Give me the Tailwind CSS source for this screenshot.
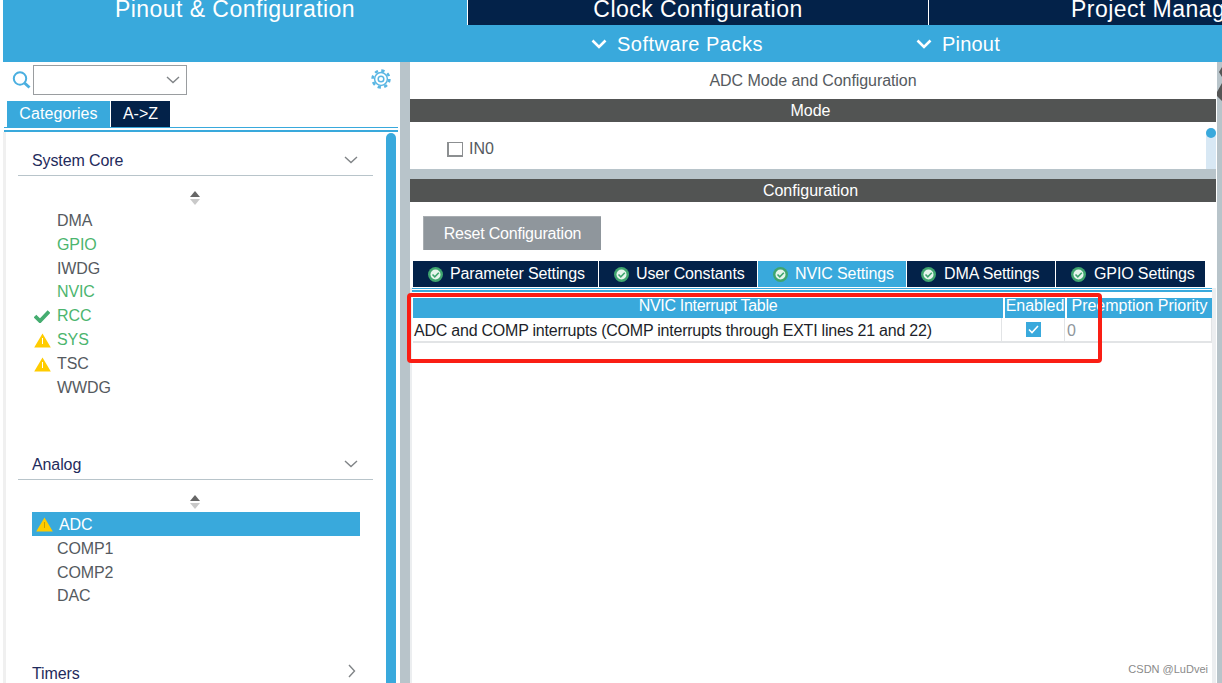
<!DOCTYPE html>
<html lang="en">
<head>
    <meta charset="UTF-8">
    <title>ADC Mode and Configuration</title>
    <script src="https://cdn.jsdelivr.net/npm/@tailwindcss/browser@4"></script>
</head>
<body class="bg-white overflow-hidden font-['Liberation_Sans',Arial,sans-serif]">
<div class="relative w-[1222px] h-[683px] overflow-hidden pl-[3px] flex flex-col">

    <!-- top nav -->
    <header class="bg-[#39a9dc] h-[62px] shrink-0 text-white">
        <div class="flex h-[25px] overflow-hidden text-[23px] leading-[18px] tracking-[0.45px]">
            <div class="w-[464px] shrink-0 text-center">Pinout &amp; Configuration</div>
            <div class="w-[461px] shrink-0 bg-[#032249] border-l border-white text-center">Clock Configuration</div>
            <div class="flex-1 bg-[#032249] border-l border-white pl-[142px] whitespace-nowrap">Project Manager</div>
        </div>
        <div class="flex h-[37px] items-center text-[20px] tracking-[0.5px]">
            <div class="w-[761px] shrink-0 flex justify-end items-center gap-[10px]">
                <svg class="w-[16px] h-[12px]" viewBox="0 0 16 12" fill="none" stroke="white" stroke-width="2.6"><path d="M1.5 2.5 8 9l6.5-6.5"/></svg>
                <span class="w-[147px] whitespace-nowrap">Software Packs</span>
            </div>
            <div class="ml-[152px] flex items-center gap-[10px]">
                <svg class="w-[16px] h-[12px]" viewBox="0 0 16 12" fill="none" stroke="white" stroke-width="2.6"><path d="M1.5 2.5 8 9l6.5-6.5"/></svg>
                <span class="tracking-[0.2px]">Pinout</span>
            </div>
        </div>
    </header>

    <div class="flex flex-1 min-h-0">
        <!-- left panel -->
        <aside class="w-[397px] shrink-0 flex flex-col">
            <div class="h-[39px] shrink-0 flex items-center pl-[9px] pr-[9px]">
                <svg class="w-[20px] h-[20px] mr-[1px] mb-[3px]" viewBox="0 0 20 20" fill="none" stroke="#4aafe0"><circle cx="8" cy="8.5" r="6.2" stroke-width="2"/><path d="M12.5 13l5 4.5" stroke-width="3"/></svg>
                <div class="w-[154px] h-[30px] mb-[3px] border border-[#9a9da0] flex items-center justify-end pr-[6px]">
                    <svg class="w-[14px] h-[8px]" viewBox="0 0 14 8" fill="none" stroke="#808487" stroke-width="1.4"><path d="M1 1l6 5.5L13 1"/></svg>
                </div>
                <svg class="w-[20px] h-[20px] ml-auto mb-[6px]" viewBox="0 0 20 20" fill="none" stroke="#5ab6e3"><circle cx="10" cy="10" r="8.4" stroke-width="2.6" stroke-dasharray="3.3 3.3"/><circle cx="10" cy="10" r="6.4" stroke-width="1.5"/><circle cx="10" cy="10" r="2.8" stroke-width="1.5"/></svg>
            </div>
            <div class="flex h-[26px] shrink-0 ml-[4px] text-[16px] leading-[26px] text-white">
                <div class="w-[103px] bg-[#39a9dc] text-center tracking-[0.1px]">Categories</div>
                <div class="w-[59px] ml-[1px] bg-[#032249] text-center">A-&gt;Z</div>
            </div>
            <div class="ml-[1px] mr-[2px] h-[5px] shrink-0 border-t border-b-[2px] border-[#39a9dc]"></div>

            <div class="flex flex-1 min-h-0 overflow-hidden">
                <div class="w-[3px] bg-[#f0f0f0] shrink-0"></div>
                <div class="w-[380px] shrink-0 text-[16px] leading-[24px] text-[#555a60] tracking-[-0.1px]">
                    <section class="h-[321px] pt-[17px] pl-[12px]">
                        <div class="w-[355px] h-[27px] border-b border-[#b8c4ca] pl-[14px] flex justify-between text-[#1f2b5c] leading-[23px]">
                            <span>System Core</span>
                            <svg class="w-[14px] h-[8px] mt-[7px] mr-[15px]" viewBox="0 0 14 8" fill="none" stroke="#808487" stroke-width="1.4"><path d="M1 1l6 5.5L13 1"/></svg>
                        </div>
                        <div class="h-[33px] w-[355px] flex flex-col items-center pt-[15px] pr-[2px]">
                            <svg class="w-[12px] h-[14px]" viewBox="0 0 12 14"><path d="M6 0 11 6H1z" fill="#666"/><path d="M1 8h10l-5 6z" fill="#c9c9c9"/></svg>
                        </div>
                        <ul class="pl-[39px]">
                            <li class="h-[23.8px]">DMA</li>
                            <li class="h-[23.8px] text-[#4cb56e]">GPIO</li>
                            <li class="h-[23.8px]">IWDG</li>
                            <li class="h-[23.8px] text-[#4cb56e]">NVIC</li>
                            <li class="h-[23.8px] relative text-[#4cb56e]"><svg class="absolute left-[-23px] top-[6px] w-[16px] h-[13px]" viewBox="0 0 16 13" fill="none" stroke="#45ad70" stroke-width="3.8"><path d="M1 6l5 5L15 1.5"/></svg>RCC</li>
                            <li class="h-[23.8px] relative text-[#4cb56e]"><svg class="absolute left-[-23px] top-[5px] w-[17px] h-[15px]" viewBox="0 0 17 15"><path d="M8.5 0.5 16.8 14.5H.2z" fill="#ffcc00"/><path d="M8.5 5v6" stroke="#fff" stroke-width="1"/></svg>SYS</li>
                            <li class="h-[23.8px] relative"><svg class="absolute left-[-23px] top-[5px] w-[17px] h-[15px]" viewBox="0 0 17 15"><path d="M8.5 0.5 16.8 14.5H.2z" fill="#ffcc00"/><path d="M8.5 5v6" stroke="#fff" stroke-width="1"/></svg>TSC</li>
                            <li class="h-[23.8px]">WWDG</li>
                        </ul>
                    </section>
                    <section class="h-[209px] pl-[12px]">
                        <div class="w-[355px] h-[27px] border-b border-[#b8c4ca] pl-[14px] flex justify-between text-[#1f2b5c] leading-[23px]">
                            <span>Analog</span>
                            <svg class="w-[14px] h-[8px] mt-[7px] mr-[15px]" viewBox="0 0 14 8" fill="none" stroke="#808487" stroke-width="1.4"><path d="M1 1l6 5.5L13 1"/></svg>
                        </div>
                        <div class="h-[32px] w-[355px] flex flex-col items-center pt-[15px] pr-[2px]">
                            <svg class="w-[12px] h-[14px]" viewBox="0 0 12 14"><path d="M6 0 11 6H1z" fill="#666"/><path d="M1 8h10l-5 6z" fill="#c9c9c9"/></svg>
                        </div>
                        <ul class="pl-[14px]">
                            <li class="h-[24px] w-[328px] bg-[#39a9dc] text-white flex items-center">
                                <svg class="ml-[4px] w-[17px] h-[15px]" viewBox="0 0 17 15"><path d="M8.5 0.5 16.8 14.5H.2z" fill="#ffcc00"/><path d="M8.5 5v6" stroke="#c9a000" stroke-width="1"/></svg>
                                <span class="ml-[6px] pt-[1px]">ADC</span>
                            </li>
                            <li class="h-[23.8px] pl-[25px] pt-[1px]">COMP1</li>
                            <li class="h-[23.8px] pl-[25px] pt-[1px]">COMP2</li>
                            <li class="h-[23.8px] pl-[25px]">DAC</li>
                        </ul>
                    </section>
                    <section class="pl-[12px]">
                        <div class="w-[355px] h-[24px] pl-[14px] flex justify-between text-[#1f2b5c] leading-[24px]">
                            <span>Timers</span>
                            <svg class="w-[8px] h-[14px] mr-[17px] mt-[2px]" viewBox="0 0 8 14" fill="none" stroke="#808487" stroke-width="1.4"><path d="M1 1l5.5 6L1 13"/></svg>
                        </div>
                    </section>
                </div>
                <div class="w-[10px] shrink-0 bg-[#39a9dc] rounded-t-[5px] mt-[1px]"></div>
            </div>
        </aside>

        <div class="w-[10px] shrink-0 bg-[#b8c4ca]"></div>

        <!-- right panel -->
        <main class="w-[807px] shrink-0 flex flex-col pr-[1px] text-[16px]">
            <div class="h-[37px] shrink-0 text-center leading-[37px] text-[#555a60] tracking-[-0.08px]">ADC Mode and Configuration</div>
            <div class="h-[23px] shrink-0 bg-[#525453] text-white text-center leading-[23px] pr-[5px]">Mode</div>
            <div class="h-[47px] shrink-0 flex justify-between">
                <label class="flex items-center pl-[37px] gap-[6px] text-[#555a60] pt-[7px]">
                    <span class="w-[16px] h-[15px] border-2 border-[#8c8f91] border-r border-t"></span>
                    IN0
                </label>
                <div class="w-[10px] bg-[#d8e8f4] mt-[6px] rounded-t-[5px]"><div class="w-[10px] h-[10px] rounded-full bg-[#39a9dc]"></div></div>
            </div>
            <div class="h-[10px] shrink-0 bg-[#b8c4ca]"></div>
            <div class="h-[23px] shrink-0 bg-[#525453] text-white text-center leading-[23px] pr-[5px]">Configuration</div>
            <div class="pl-[13px] pt-[14px] shrink-0">
                <button class="block w-[178px] h-[34px] bg-[#8f969c] text-white tracking-[-0.2px] border-t border-l border-[#a8adb1]">Reset Configuration</button>
            </div>
            <div class="flex h-[26px] mt-[11px] ml-[3px] shrink-0 gap-[1px] text-white tracking-[-0.12px]">
                <div class="w-[185px] bg-[#032249] flex items-center pl-[15px] gap-[7px]">
                    <svg class="w-[15px] h-[15px]" viewBox="0 0 15 15"><circle cx="7.5" cy="7.5" r="7.5" fill="#3fa56f"/><circle cx="7.5" cy="7.5" r="5" fill="#e6f5ec"/><path d="M4.5 7.5l2.3 2.3 4-4" fill="none" stroke="#3fa56f" stroke-width="1.6"/></svg>
                    <span>Parameter Settings</span>
                </div>
                <div class="w-[158px] bg-[#032249] flex items-center pl-[15px] gap-[7px]">
                    <svg class="w-[15px] h-[15px]" viewBox="0 0 15 15"><circle cx="7.5" cy="7.5" r="7.5" fill="#3fa56f"/><circle cx="7.5" cy="7.5" r="5" fill="#e6f5ec"/><path d="M4.5 7.5l2.3 2.3 4-4" fill="none" stroke="#3fa56f" stroke-width="1.6"/></svg>
                    <span>User Constants</span>
                </div>
                <div class="w-[148px] bg-[#39a9dc] flex items-center pl-[15px] gap-[7px]">
                    <svg class="w-[15px] h-[15px]" viewBox="0 0 15 15"><circle cx="7.5" cy="7.5" r="7.5" fill="#3fa56f"/><circle cx="7.5" cy="7.5" r="5" fill="#e6f5ec"/><path d="M4.5 7.5l2.3 2.3 4-4" fill="none" stroke="#3fa56f" stroke-width="1.6"/></svg>
                    <span>NVIC Settings</span>
                </div>
                <div class="w-[148px] bg-[#032249] flex items-center pl-[14px] gap-[8px]">
                    <svg class="w-[15px] h-[15px]" viewBox="0 0 15 15"><circle cx="7.5" cy="7.5" r="7.5" fill="#3fa56f"/><circle cx="7.5" cy="7.5" r="5" fill="#e6f5ec"/><path d="M4.5 7.5l2.3 2.3 4-4" fill="none" stroke="#3fa56f" stroke-width="1.6"/></svg>
                    <span>DMA Settings</span>
                </div>
                <div class="w-[149px] bg-[#032249] flex items-center pl-[15px] gap-[8px]">
                    <svg class="w-[15px] h-[15px]" viewBox="0 0 15 15"><circle cx="7.5" cy="7.5" r="7.5" fill="#3fa56f"/><circle cx="7.5" cy="7.5" r="5" fill="#e6f5ec"/><path d="M4.5 7.5l2.3 2.3 4-4" fill="none" stroke="#3fa56f" stroke-width="1.6"/></svg>
                    <span>GPIO Settings</span>
                </div>
            </div>

            <div class="flex flex-1 min-h-0 mt-[1px]">
                <div class="flex-1 min-w-0 border-l-2 border-[#eceef0]">
                    <div class="h-[4px] border-t border-b-[2px] border-[#39a9dc]"></div>

                    <!-- interrupt table -->
                    <div class="ml-[1px] mt-[6px] w-[799px]">
                        <div class="flex h-[20px] gap-[2px] text-white leading-[15px] bg-white">
                            <div class="w-[590px] bg-[#39a9dc] text-center tracking-[-0.3px]">NVIC Interrupt Table</div>
                            <div class="w-[60px] bg-[#39a9dc] text-center">Enabled</div>
                            <div class="flex-1 bg-[#39a9dc] text-center">Preemption Priority</div>
                        </div>
                        <div class="flex h-[25px] border-b-2 border-[#e2e4e6] border-r border-r-[#e2e4e6] leading-[25px] text-[#1d1f2a]">
                            <div class="w-[589px] pl-[1px] whitespace-nowrap border-r border-[#e2e4e6] tracking-[-0.23px]">ADC and COMP interrupts (COMP interrupts through EXTI lines 21 and 22)</div>
                            <div class="w-[63px] flex justify-center items-center border-r border-[#e2e4e6]">
                                <span class="w-[15px] h-[15px] bg-[#39a9dc] flex items-center justify-center">
                                    <svg class="w-[11px] h-[9px]" viewBox="0 0 11 9" fill="none" stroke="white" stroke-width="1.6"><path d="M1 4.5l3 3L10 1"/></svg>
                                </span>
                            </div>
                            <div class="pl-[2px] text-[#8f969c]">0</div>
                        </div>
                    </div>
                </div>
                <div class="w-[4px] shrink-0 bg-[#eceef0]"></div>
            </div>
        </main>

        <!-- edge of the window behind -->
        <div class="w-[5px] shrink-0 bg-[#b8c4ca]"></div>
    </div>

    <!-- overlays: annotation, cut-off window edge, watermark -->
    <div class="absolute left-[407px] top-[293px] w-[695px] h-[70px] border-[4px] border-[#fa1e14] rounded-[4px]"></div>
    <svg class="absolute left-[1217px] top-[62px] w-[5px] h-[48px]" viewBox="0 0 5 48"><path d="M5 5 2 10l3 5zM5 21 0 30v4l5 5z" fill="#555"/></svg>
    <div class="absolute right-[14px] top-[663px] text-[11px] leading-[13px] text-[#8a8a8a]">CSDN @LuDvei</div>
</div>
</body>
</html>
